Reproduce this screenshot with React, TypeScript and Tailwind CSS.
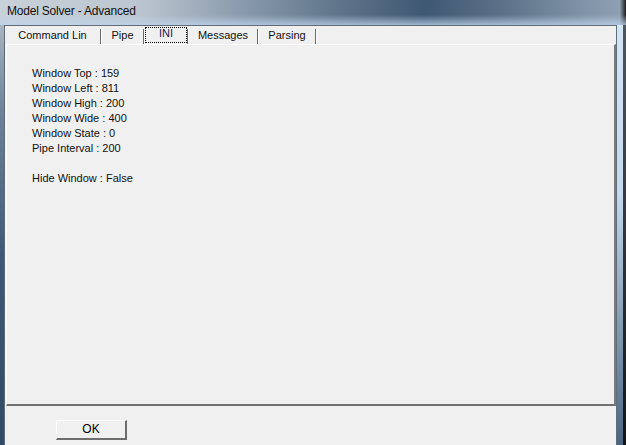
import React from 'react'

const lines = [
  'Window Top : 159',
  'Window Left : 811',
  'Window High : 200',
  'Window Wide : 400',
  'Window State : 0',
  'Pipe Interval : 200',
]

function Sep() {
  return (
    <div className="h-[15px] self-end flex">
      <div className="w-[1px] bg-[#6a6a6a]" />
      <div className="w-[1px] bg-white" />
    </div>
  )
}

export default function App() {
  return (
    <div className="w-[626px] h-[445px] flex flex-col overflow-hidden font-['Liberation_Sans',Arial,sans-serif] text-black bg-[#f0f0f0]">
      {/* Title bar */}
      <div className="h-[25px] shrink-0 pl-[7px] pt-[3px] text-[12px] leading-[16px] tracking-[-0.2px] bg-[linear-gradient(to_right,#c9d1d9_0%,#bcc6d0_22%,#8697aa_40%,#5d7389_55%,#3f5872_68%,#5b7188_80%,#7d90a5_92%,#8fa0b4_99%,#1a1a1a_100%)] relative">
        <div className="absolute inset-x-0 bottom-0 h-[10px] bg-[linear-gradient(to_bottom,rgba(190,210,232,0),rgba(190,212,236,0.75))]" />
        <span className="relative text-[#111]">Model Solver - Advanced</span>
      </div>

      <div className="flex flex-1 min-h-0">
        {/* left frame */}
        <div className="w-[4px] shrink-0 bg-[linear-gradient(to_bottom,#a9b5c1_0%,#6f8399_20%,#3e5a78_55%,#2f4a66_100%)]" />

        {/* client */}
        <div className="flex-1 flex flex-col border-l border-r border-t border-[#5f6d7a] bg-[#f0f0f0]">
          {/* tabs */}
          <div className="h-[18px] shrink-0 flex text-[11px] text-[#111]">
            <div className="w-[95px] h-[15px] self-end leading-[13px] text-center">Command Lin</div>
            <Sep />
            <div className="w-[41px] h-[15px] self-end leading-[13px] text-center">Pipe</div>
            <Sep />
            <div className="w-[42px] h-full flex pt-[1px]">
              <div className="w-[42px] h-[16px] border border-dotted border-black leading-[11px] text-center text-[#1a1a50]">INI</div>
            </div>
            <Sep />
            <div className="w-[68px] h-[15px] self-end leading-[13px] text-center">Messages</div>
            <Sep />
            <div className="w-[56px] h-[15px] self-end leading-[13px] text-center">Parsing</div>
            <Sep />
          </div>

          {/* panel */}
          <div className="ml-[1px] h-[362px] shrink-0 border-t border-l border-t-white border-l-white border-r-2 border-b-2 border-r-[#7a7a7a] border-b-[#707070] pl-[25px] pt-[21px] text-[11px] leading-[15px] text-[#111]">
            {lines.map((l) => (
              <div key={l}>{l}</div>
            ))}
            <div className="h-[15px]" />
            <div>Hide Window : False</div>
          </div>

          {/* bottom */}
          <div className="flex-1 pl-[51px] pt-[10px]">
            <button className="w-[71px] h-[20px] border-t border-l border-white border-r-2 border-b-2 border-r-[#6d6d6d] border-b-[#6d6d6d] bg-[#f0f0f0] text-[12px] leading-[16px] text-center">
              OK
            </button>
          </div>
        </div>

        {/* right frame */}
        <div className="w-[9px] shrink-0 flex">
          <div className="w-[6px] bg-[linear-gradient(to_bottom,#d3e4f5_0%,#c6d9ec_40%,#7d95ad_75%,#4a6580_100%)]" />
          <div className="w-[3px] bg-[linear-gradient(to_bottom,#4d5660,#151515)]" />
        </div>
      </div>
    </div>
  )
}
